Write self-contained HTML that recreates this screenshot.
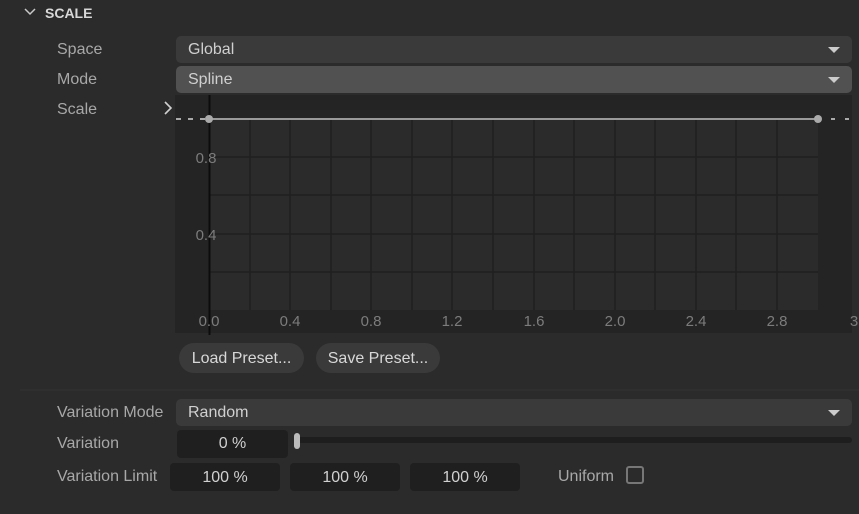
<!DOCTYPE html>
<html><head><meta charset="utf-8"><style>
*{margin:0;padding:0;box-sizing:border-box}
body{width:859px;height:514px;background:#2b2b2b;font-family:"Liberation Sans",sans-serif;color:#b4b4b4;position:relative;overflow:hidden;font-size:16px}
.a{position:absolute;white-space:nowrap}
.lbl{color:#a8a8a8;font-size:16px}
.dd{position:absolute;left:176px;width:676px;height:27px;border-radius:5px;background:#3a3a3a;color:#d0d0d0;padding-left:12px;line-height:27px}
.dd:after{content:"";position:absolute;right:12px;top:11px;border-left:6px solid transparent;border-right:6px solid transparent;border-top:6px solid #ccc}
.fld{position:absolute;height:28px;background:#1f1f1f;border-radius:4px;color:#d0d0d0;text-align:center;line-height:28px}
.btn{position:absolute;top:343px;height:30px;border-radius:15px;background:#3a3a3a;color:#d8d8d8;line-height:30px;text-align:center}
</style></head><body>
<svg class="a" style="left:24px;top:7px" width="12" height="10"><path d="M1 2 L6 7 L11 2" stroke="#c8c8c8" stroke-width="1.5" fill="none"/></svg>
<div class="a" style="left:45px;top:5px;font-weight:bold;color:#d8d8d8;font-size:14px">SCALE</div>
<div class="a lbl" style="left:57px;top:41px">Space</div>
<div class="a lbl" style="left:57px;top:71px">Mode</div>
<div class="a lbl" style="left:57px;top:101px">Scale</div>
<div class="dd" style="top:36px;line-height:28px">Global</div>
<div class="dd" style="top:66px;background:#515151;line-height:28px">Spline</div>
<svg class="a" style="left:163px;top:101px" width="10" height="14"><path d="M2 1 L8 7 L2 13" stroke="#d0d0d0" stroke-width="1.6" fill="none"/></svg>
<svg class="a" style="left:0;top:0" width="859" height="514">
<rect x="175" y="95" width="677" height="238" fill="#242424"/>
<rect x="210" y="118" width="608" height="192" fill="#2b2b2b"/>
<g stroke="#202020" stroke-width="1.5">
<line x1="250" y1="118" x2="250" y2="310"/><line x1="290" y1="118" x2="290" y2="310"/><line x1="331" y1="118" x2="331" y2="310"/><line x1="371" y1="118" x2="371" y2="310"/><line x1="412" y1="118" x2="412" y2="310"/><line x1="452" y1="118" x2="452" y2="310"/><line x1="493" y1="118" x2="493" y2="310"/><line x1="534" y1="118" x2="534" y2="310"/><line x1="574" y1="118" x2="574" y2="310"/><line x1="615" y1="118" x2="615" y2="310"/><line x1="655" y1="118" x2="655" y2="310"/><line x1="696" y1="118" x2="696" y2="310"/><line x1="736" y1="118" x2="736" y2="310"/><line x1="777" y1="118" x2="777" y2="310"/>
<line x1="210" y1="157" x2="818" y2="157"/><line x1="210" y1="195" x2="818" y2="195"/><line x1="210" y1="234" x2="818" y2="234"/><line x1="210" y1="272" x2="818" y2="272"/>
</g>
<line x1="209.5" y1="95" x2="209.5" y2="335" stroke="#0c0c0c" stroke-width="2"/>
<line x1="209" y1="119" x2="818" y2="119" stroke="#9a9a9a" stroke-width="2"/>
<line x1="176" y1="119" x2="205" y2="119" stroke="#aaa" stroke-width="2" stroke-dasharray="5 7"/>
<line x1="831" y1="119" x2="852" y2="119" stroke="#aaa" stroke-width="2" stroke-dasharray="4 10"/>
<circle cx="209" cy="119" r="4" fill="#aaa"/><circle cx="818" cy="119" r="4" fill="#aaa"/>
<g fill="#7c7c7c" font-family="Liberation Sans" font-size="15" text-anchor="middle">
<text x="206" y="163">0.8</text><text x="206" y="240">0.4</text>
<text x="209" y="326">0.0</text><text x="290" y="326">0.4</text><text x="371" y="326">0.8</text><text x="452" y="326">1.2</text><text x="534" y="326">1.6</text><text x="615" y="326">2.0</text><text x="696" y="326">2.4</text><text x="777" y="326">2.8</text><text x="854" y="326">3</text>
</g>
<line x1="20" y1="390" x2="859" y2="390" stroke="#333" stroke-width="1"/>
</svg>
<div class="btn" style="left:179px;width:125px;line-height:31px">Load Preset...</div>
<div class="btn" style="left:316px;width:124px;line-height:31px">Save Preset...</div>
<div class="a lbl" style="left:57px;top:404px">Variation Mode</div>
<div class="a lbl" style="left:57px;top:435px">Variation</div>
<div class="a lbl" style="left:57px;top:468px">Variation Limit</div>
<div class="dd" style="top:399px;line-height:28px">Random</div>
<div class="fld" style="left:177px;top:430px;width:111px">0 %</div>
<div class="a" style="left:296px;top:437px;width:556px;height:6px;background:#1e1e1e;border-radius:3px"></div>
<div class="a" style="left:294px;top:433px;width:6px;height:16px;background:#bbb;border-radius:3px"></div>
<div class="fld" style="left:170px;top:463px;width:110px;line-height:29px">100 %</div>
<div class="fld" style="left:290px;top:463px;width:110px;line-height:29px">100 %</div>
<div class="fld" style="left:410px;top:463px;width:110px;line-height:29px">100 %</div>
<div class="a lbl" style="left:558px;top:468px">Uniform</div>
<div class="a" style="left:626px;top:466px;width:18px;height:18px;border:2px solid #777;border-radius:3px"></div>
</body></html>
